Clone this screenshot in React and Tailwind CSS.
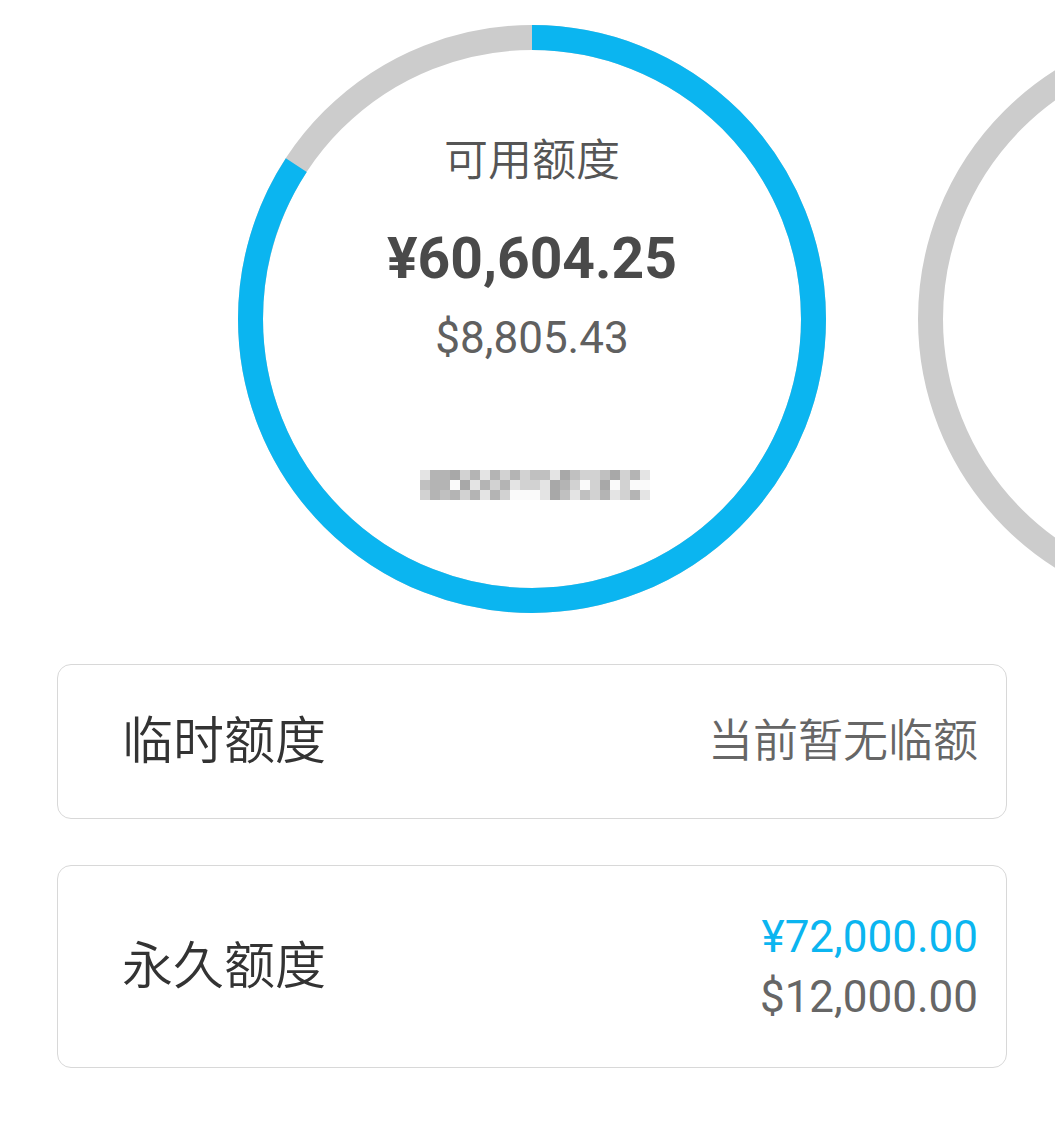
import React from "react";

const font = { fontFamily: "Roboto, 'Noto Sans CJK SC', sans-serif" };

// blurred mosaic under the amount
const shade = {
  a: "bg-[#a8a8a8]",
  b: "bg-[#b4b4b4]",
  c: "bg-[#c0c0c0]",
  d: "bg-[#d2d2d2]",
  e: "bg-[#e4e4e4]",
  f: "bg-[#fafafa]",
};
const mosaic = [
  "ebbadbebdbdcceacddcadbe",
  "cbbfaebdbeddeabdfdafdff",
  "dbcbdbebdfffeacecdbedbe",
];

function Ring({ progress, children }) {
  const r = 281.5;
  const c = 2 * Math.PI * r;
  return (
    <div className="relative w-[588px] h-[588px] shrink-0">
      <svg width="588" height="588" viewBox="0 0 588 588" className="absolute inset-0">
        <circle cx="294" cy="294" r={r} fill="none" stroke="#cccccc" strokeWidth="25" />
        {progress > 0 && (
          <circle
            cx="294"
            cy="294"
            r={r}
            fill="none"
            stroke="#0bb5f0"
            strokeWidth="25"
            strokeDasharray={`${c * progress} ${c}`}
            transform="rotate(-90 294 294)"
          />
        )}
      </svg>
      <div className="relative flex flex-col items-center">{children}</div>
    </div>
  );
}

function Card({ label, height, children }) {
  return (
    <div
      className={`flex items-center justify-between border border-[#d8d8d8] rounded-[14px] pl-[64px] pr-[28px] ${height}`}
    >
      <span className="text-[51px] leading-none font-[350] text-[#333333]">{label}</span>
      <div className="flex flex-col items-end">{children}</div>
    </div>
  );
}

export default function App() {
  return (
    <div className="w-[1055px] h-[1147px] bg-white overflow-hidden" style={font}>
      <div className="flex gap-[92px] pl-[238px] pt-[25px] overflow-hidden">
        <Ring progress={60604.25 / 72000}>
          <div className="pt-[110px] text-[44px] leading-[52px] font-[350] text-[#555555]">可用额度</div>
          <div className="mt-[37px] text-[57px] leading-[70px] font-bold text-[#4a4a4a]">¥60,604.25</div>
          <div className="mt-[16px] text-[44px] leading-[56px] text-[#606060]">$8,805.43</div>
          <div className="mt-[104px] ml-[6px] flex flex-col">
            {mosaic.map((row, i) => (
              <div key={i} className="flex">
                {row.split("").map((k, j) => (
                  <div key={j} className={`w-[10px] h-[10px] ${shade[k]}`} />
                ))}
              </div>
            ))}
          </div>
        </Ring>
        <Ring progress={0} />
      </div>

      <div className="ml-[57px] mr-[48px] mt-[51px] flex flex-col gap-[46px]">
        <Card label="临时额度" height="h-[155px]">
          <span className="text-[45px] leading-none font-[350] text-[#666666]">当前暂无临额</span>
        </Card>
        <Card label="永久额度" height="h-[203px]">
          <span className="text-[44px] leading-[60px] text-[#0bb5f0]">¥72,000.00</span>
          <span className="text-[44px] leading-[60px] text-[#666666]">$12,000.00</span>
        </Card>
      </div>
    </div>
  );
}
